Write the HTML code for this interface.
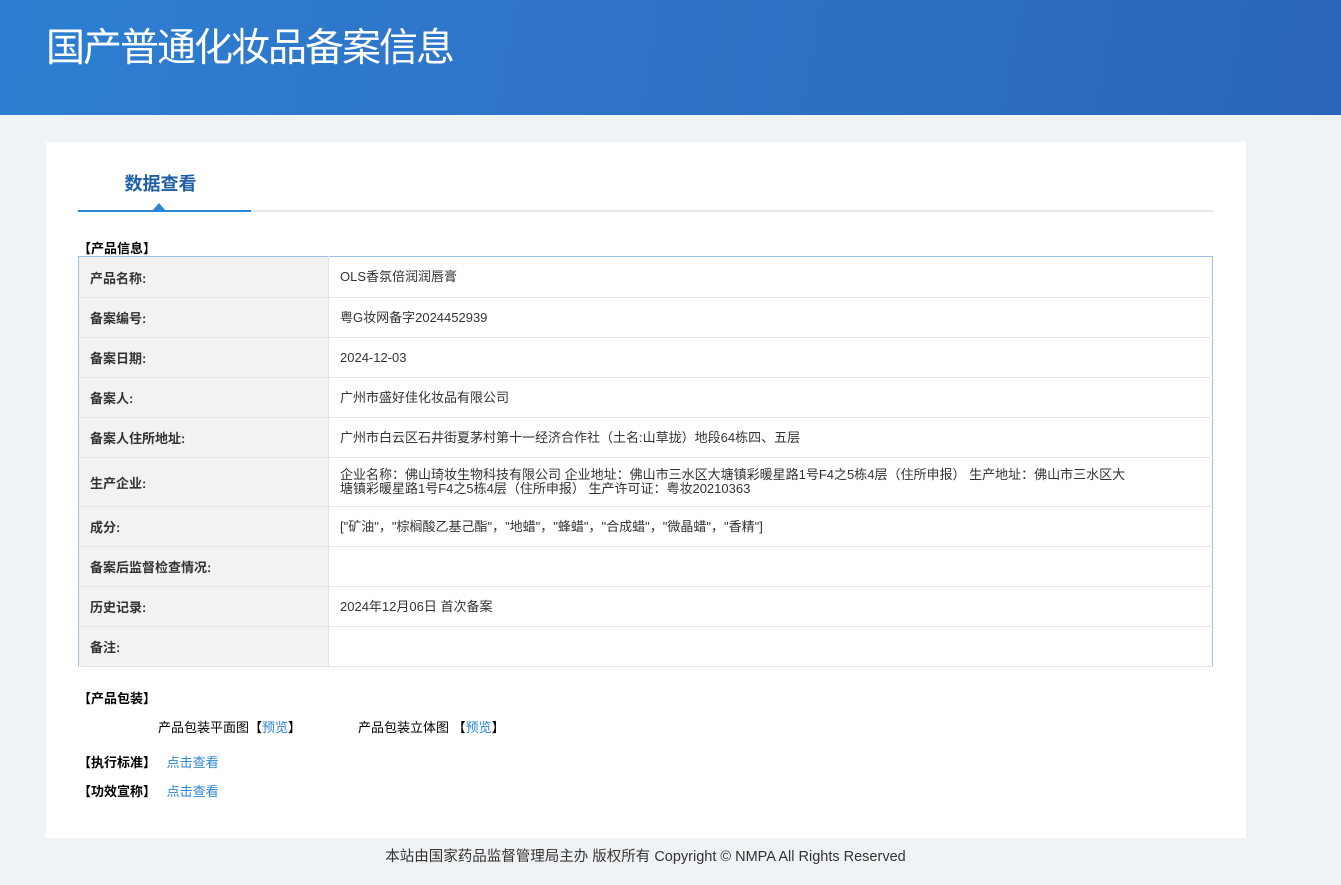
<!DOCTYPE html>
<html><head><meta charset="utf-8"><style>
*{margin:0;padding:0;box-sizing:border-box}
body{width:1341px;height:885px;background:#eff3f6;font-family:"Liberation Sans","Noto Sans CJK SC",sans-serif;font-size:13px;color:#333;position:relative;overflow:hidden}
.hdr{position:absolute;left:0;top:0;width:1341px;height:115px;background:linear-gradient(100deg,#2c7fd2 0%,#2f74c8 40%,#2c6fc0 70%,#2a66b8 100%);overflow:hidden}
.hdr h1{position:absolute;left:46px;top:17px;font-size:39px;font-weight:normal;color:#fff;font-family:"Noto Sans CJK SC",sans-serif;letter-spacing:-2px}
.card{position:absolute;left:46px;top:142px;width:1200px;height:696px;background:#fff}
.tab{position:absolute;left:74px;top:170px;font-size:18px;font-weight:bold;color:#1f5fa8;width:173px;text-align:center}
.line{position:absolute;left:78px;top:210px;width:1135px;height:2px;background:#e6e6e6}
.line i{position:absolute;left:0;top:0;width:173px;height:2px;background:#2a86d6}
.tri{position:absolute;left:153px;top:203px;width:0;height:0;border-left:6px solid transparent;border-right:6px solid transparent;border-bottom:7px solid #2a86d6}
.sec{position:absolute;left:78px;font-weight:bold;color:#000}
table{position:absolute;left:78px;top:256px;width:1135px;border-collapse:collapse;border:1px solid #9dbfe8}
td{border-bottom:1px solid #e4e4e4;height:40px;vertical-align:middle}
td.l{width:250px;background:#f2f2f2;font-weight:bold;padding-left:11px;border-right:1px solid #e4e4e4}
td.v{padding-left:11px;line-height:14px}
a{color:#2a86d6;text-decoration:none}
.foot{position:absolute;top:845px;left:0;width:1291px;text-align:center;font-size:14.5px;color:#333}
</style></head><body>
<div class="hdr"><h1>国产普通化妆品备案信息</h1></div>
<div class="card"></div>
<div class="tab">数据查看</div>
<div class="line"><i></i></div>
<div class="tri"></div>
<div class="sec" style="top:238px">【产品信息】</div>
<table>
<tr><td class="l" style="height:41px">产品名称:</td><td class="v">OLS香氛倍润润唇膏</td></tr>
<tr><td class="l">备案编号:</td><td class="v">粤G妆网备字2024452939</td></tr>
<tr><td class="l">备案日期:</td><td class="v">2024-12-03</td></tr>
<tr><td class="l">备案人:</td><td class="v">广州市盛好佳化妆品有限公司</td></tr>
<tr><td class="l">备案人住所地址:</td><td class="v">广州市白云区石井街夏茅村第十一经济合作社（土名:山草拢）地段64栋四、五层</td></tr>
<tr><td class="l" style="height:49px">生产企业:</td><td class="v">企业名称：佛山琦妆生物科技有限公司 企业地址：佛山市三水区大塘镇彩暖星路1号F4之5栋4层（住所申报） 生产地址：佛山市三水区大<br>塘镇彩暖星路1号F4之5栋4层（住所申报） 生产许可证：粤妆20210363</td></tr>
<tr><td class="l">成分:</td><td class="v">["矿油"，"棕榈酸乙基己酯"，"地蜡"，"蜂蜡"，"合成蜡"，"微晶蜡"，"香精"]</td></tr>
<tr><td class="l">备案后监督检查情况:</td><td class="v"></td></tr>
<tr><td class="l">历史记录:</td><td class="v">2024年12月06日 首次备案</td></tr>
<tr><td class="l">备注:</td><td class="v"></td></tr>
</table>
<div class="sec" style="top:688px">【产品包装】</div>
<div style="position:absolute;left:158px;top:717px;color:#000">产品包装平面图【<a>预览</a>】</div>
<div style="position:absolute;left:358px;top:717px;color:#000">产品包装立体图 【<a>预览</a>】</div>
<div class="sec" style="top:752px">【执行标准】 <a style="font-weight:normal;margin-left:7px">点击查看</a></div>
<div class="sec" style="top:781px">【功效宣称】 <a style="font-weight:normal;margin-left:7px">点击查看</a></div>
<div class="foot">本站由国家药品监督管理局主办 版权所有 Copyright © NMPA All Rights Reserved</div>
</body></html>
